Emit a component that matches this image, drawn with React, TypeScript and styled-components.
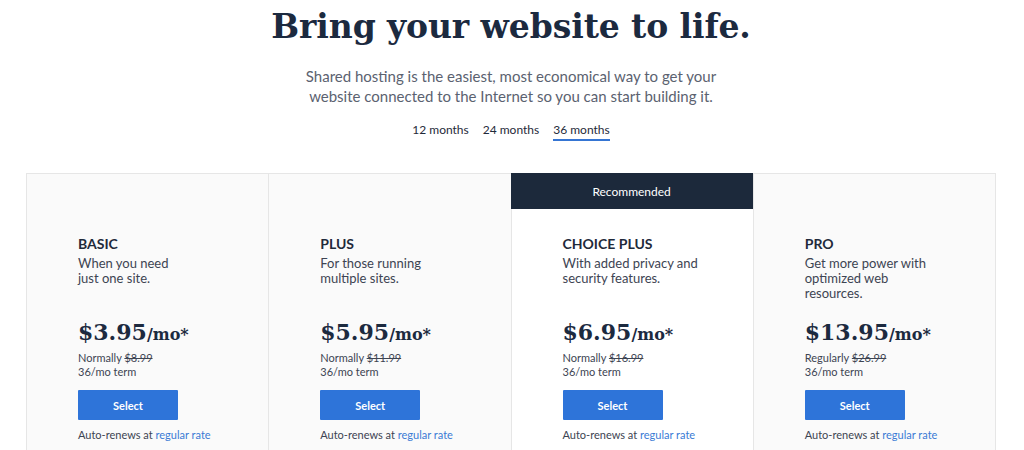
import React, { useState } from 'react';
import styled, { createGlobalStyle } from 'styled-components';

const GlobalStyle = createGlobalStyle`
  html, body {
    margin: 0;
    padding: 0;
    background: #ffffff;
  }
  body {
    font-family: "Lato", "Liberation Sans", sans-serif;
    color: #1f2a3a;
  }
`;

interface Plan {
  name: string;
  lines: string[];
  price: string;
  oldLabel: string;
  oldPrice: string;
  recommended?: boolean;
}

const plans: Plan[] = [
  { name: 'BASIC', lines: ['When you need', 'just one site.'], price: '$3.95', oldLabel: 'Normally', oldPrice: '$8.99' },
  { name: 'PLUS', lines: ['For those running', 'multiple sites.'], price: '$5.95', oldLabel: 'Normally', oldPrice: '$11.99' },
  {
    name: 'CHOICE PLUS',
    lines: ['With added privacy and', 'security features.'],
    price: '$6.95',
    oldLabel: 'Normally',
    oldPrice: '$16.99',
    recommended: true,
  },
  { name: 'PRO', lines: ['Get more power with', 'optimized web', 'resources.'], price: '$13.95', oldLabel: 'Regularly', oldPrice: '$26.99' },
];

const terms = ['12 months', '24 months', '36 months'];

const Page = styled.div`
  padding: 7px 28px 0 26px;
  display: flex;
  flex-direction: column;
  align-items: center;
`;

const Heading = styled.h1`
  margin: 0;
  font-family: "DejaVu Serif", "Liberation Serif", serif;
  font-weight: 700;
  font-size: 33px;
  line-height: 39px;
  color: #1c2a3f;
  letter-spacing: -0.1px;
`;

const Lead = styled.p`
  margin: 20px 0 0;
  text-align: center;
  font-size: 15px;
  line-height: 20px;
  color: #5b6270;
`;

const Tabs = styled.div`
  display: flex;
  gap: 14px;
  margin-top: 16px;
`;

const Tab = styled.button<{ $active: boolean }>`
  background: none;
  border: 0;
  padding: 0 0 2px;
  font-family: inherit;
  font-size: 12px;
  line-height: 15px;
  color: #1f2a3a;
  cursor: pointer;
  border-bottom: 2px solid ${p => (p.$active ? '#3575d3' : 'transparent')};
`;

const Grid = styled.div`
  align-self: stretch;
  margin-top: 32px;
  display: grid;
  grid-template-columns: repeat(4, 1fr);
  border-top: 1px solid #e6e6e6;
  border-right: 1px solid #e6e6e6;
`;

const Card = styled.div<{ $featured: boolean }>`
  display: flex;
  flex-direction: column;
  background: ${p => (p.$featured ? '#ffffff' : '#fafafa')};
  border-left: 1px solid #e6e6e6;
  height: 280px;
`;

const Ribbon = styled.div<{ $show: boolean }>`
  height: 36px;
  display: flex;
  align-items: center;
  justify-content: center;
  background: ${p => (p.$show ? '#1c293b' : 'transparent')};
  color: #ffffff;
  font-size: 12px;
  margin: -1px 0 0 -1px;
`;

const Body = styled.div`
  padding: 26px 20px 0 51px;
  display: flex;
  flex-direction: column;
`;

const PlanName = styled.h3`
  margin: 0;
  font-size: 14px;
  line-height: 17px;
  font-weight: 700;
  color: #1f2a3a;
`;

const Blurb = styled.p`
  margin: 4px 0 0;
  height: 63px;
  font-size: 13px;
  line-height: 15px;
  color: #3d4452;
`;

const Price = styled.div`
  font-family: "DejaVu Serif", "Liberation Serif", serif;
  font-weight: 700;
  font-size: 22px;
  line-height: 26px;
  color: #1c2a3f;
`;

const PerMonth = styled.span`
  font-size: 16px;
`;

const Note = styled.div`
  margin-top: 3px;
  font-size: 11px;
  line-height: 14px;
  color: #3d4452;
`;

const Struck = styled.s`
  text-decoration-thickness: 1px;
`;

const SelectButton = styled.button`
  margin-top: 11px;
  width: 100px;
  height: 30px;
  border: 0;
  border-radius: 1px;
  background: #2e74d9;
  color: #ffffff;
  font-family: inherit;
  font-size: 11px;
  font-weight: 700;
  cursor: pointer;
`;

const Renew = styled.div`
  margin-top: 8px;
  font-size: 11px;
  line-height: 14px;
  color: #3d4452;
`;

const Link = styled.a`
  color: #3a7bd5;
  text-decoration: none;
`;

export default function App() {
  const [term, setTerm] = useState('36 months');

  return (
    <>
      <GlobalStyle />
      <Page>
        <Heading>Bring your website to life.</Heading>
        <Lead>
          Shared hosting is the easiest, most economical way to get your
          <br />
          website connected to the Internet so you can start building it.
        </Lead>
        <Tabs>
          {terms.map(t => (
            <Tab key={t} $active={t === term} onClick={() => setTerm(t)}>
              {t}
            </Tab>
          ))}
        </Tabs>
        <Grid>
          {plans.map(plan => (
            <Card key={plan.name} $featured={!!plan.recommended}>
              <Ribbon $show={!!plan.recommended}>{plan.recommended ? 'Recommended' : ''}</Ribbon>
              <Body>
                <PlanName>{plan.name}</PlanName>
                <Blurb>
                  {plan.lines.map((l, i) => (
                    <React.Fragment key={i}>
                      {i > 0 && <br />}
                      {l}
                    </React.Fragment>
                  ))}
                </Blurb>
                <Price>
                  {plan.price}
                  <PerMonth>/mo*</PerMonth>
                </Price>
                <Note>
                  {plan.oldLabel} <Struck>{plan.oldPrice}</Struck>
                  <br />
                  36/mo term
                </Note>
                <SelectButton>Select</SelectButton>
                <Renew>
                  Auto-renews at <Link href="#">regular rate</Link>
                </Renew>
              </Body>
            </Card>
          ))}
        </Grid>
      </Page>
    </>
  );
}
